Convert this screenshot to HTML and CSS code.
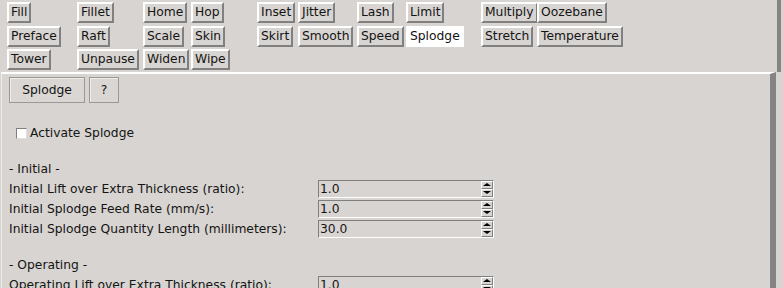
FILE: index.html
```html
<!DOCTYPE html>
<html lang="en">

<head>
    <meta charset="UTF-8">
    <title>Splodge</title>
    <link rel="stylesheet" href="styles.css">
</head>

<body>
    <div class="toolbar">
        <button class="tool">Fill</button>
        <button class="tool">Fillet</button>
        <button class="tool">Home</button>
        <button class="tool">Hop</button>
        <button class="tool">Inset</button>
        <button class="tool">Jitter</button>
        <button class="tool">Lash</button>
        <button class="tool">Limit</button>
        <button class="tool">Multiply</button>
        <button class="tool">Oozebane</button>

        <button class="tool">Preface</button>
        <button class="tool">Raft</button>
        <button class="tool">Scale</button>
        <button class="tool">Skin</button>
        <button class="tool">Skirt</button>
        <button class="tool">Smooth</button>
        <button class="tool">Speed</button>
        <button class="tool active">Splodge</button>
        <button class="tool">Stretch</button>
        <button class="tool">Temperature</button>

        <button class="tool">Tower</button>
        <button class="tool">Unpause</button>
        <button class="tool">Widen</button>
        <button class="tool">Wipe</button>
    </div>

    <div class="panel">
        <div class="actions">
            <button class="flat wide">Splodge</button>
            <button class="flat">?</button>
        </div>

        <label class="check">
            <span class="box"></span>Activate Splodge
        </label>

        <div class="section">- Initial -</div>
        <div class="row">
            <span class="label">Initial Lift over Extra Thickness (ratio):</span>
            <div class="spin"><span class="value">1.0</span><span class="arrows"><i class="up"></i><i class="down"></i></span></div>
        </div>
        <div class="row">
            <span class="label">Initial Splodge Feed Rate (mm/s):</span>
            <div class="spin"><span class="value">1.0</span><span class="arrows"><i class="up"></i><i class="down"></i></span></div>
        </div>
        <div class="row">
            <span class="label">Initial Splodge Quantity Length (millimeters):</span>
            <div class="spin"><span class="value">30.0</span><span class="arrows"><i class="up"></i><i class="down"></i></span></div>
        </div>

        <div class="section gap">- Operating -</div>
        <div class="row">
            <span class="label">Operating Lift over Extra Thickness (ratio):</span>
            <div class="spin"><span class="value">1.0</span><span class="arrows"><i class="up"></i><i class="down"></i></span></div>
        </div>
    </div>
</body>

</html>
```

FILE: styles.css
```css
body {
    margin: 0;
    width: 783px;
    height: 288px;
    overflow: hidden;
    background-color: #d8d4d1;
    font-family: "DejaVu Sans", sans-serif;
    font-size: 12.3px;
    color: #141414;
}

.toolbar {
    display: grid;
    grid-template-columns: 70px 66px 48px 66px 41px 59px 49px 75px 56px 1fr;
    grid-auto-rows: 21px;
    row-gap: 2.5px;
    padding: 2px 0 0 7px;
    height: 72px;
    box-sizing: border-box;
    width: 781px;
    border-right: 4px solid #848484;
}

.tool {
    justify-self: start;
    height: 21px;
    padding: 0 2px;
    font: inherit;
    color: inherit;
    line-height: 17px;
    background-color: #d8d4d1;
    border: 2px solid;
    border-color: #ffffff #808080 #808080 #ffffff;
    cursor: pointer;
}

.tool.active {
    background-color: #ffffff;
    border-color: #ffffff;
}

.panel {
    width: 775px;
    height: 216px;
    box-sizing: border-box;
    border-top: 2px solid #ffffff;
    border-left: 1px solid #ececea;
    border-right: 6px solid #848484;
    margin-left: 1px;
    padding-left: 7px;
}

.actions {
    display: flex;
    gap: 4px;
    margin-top: 3px;
}

.flat {
    width: 30px;
    height: 26px;
    padding: 0;
    font: inherit;
    color: inherit;
    background-color: #d9d6d3;
    border: 1px solid #9c9894;
    box-shadow: inset 1px 1px #efedeb;
}

.flat.wide {
    width: 76px;
}

.check {
    display: flex;
    align-items: center;
    height: 20px;
    margin: 20px 0 0 7px;
}

.box {
    width: 11px;
    height: 11px;
    box-sizing: border-box;
    margin-right: 3px;
    background-color: #ffffff;
    border: 1px solid;
    border-color: #7f7f7f #e0e0e0 #e0e0e0 #7f7f7f;
}

.section {
    height: 20px;
    line-height: 20px;
    margin-top: 16px;
}

.section.gap {
    margin-top: 16px;
}

.row {
    display: flex;
    align-items: center;
    height: 20px;
}

.label {
    width: 309px;
}

.spin {
    display: flex;
    width: 176px;
    height: 18px;
    box-sizing: border-box;
    border: 1px solid;
    border-color: #7f7f7f #ffffff #ffffff #7f7f7f;
}

.value {
    flex: 1;
    padding-left: 1px;
    line-height: 16px;
}

.arrows {
    display: flex;
    flex-direction: column;
    width: 12px;
}

.arrows i {
    flex: 1;
    box-sizing: border-box;
    border: 1px solid;
    border-color: #ffffff #808080 #808080 #ffffff;
    position: relative;
}

.arrows i::after {
    content: "";
    position: absolute;
    left: 1px;
    border-left: 4px solid transparent;
    border-right: 4px solid transparent;
}

.arrows .up::after {
    top: 1px;
    border-bottom: 3px solid #000;
}

.arrows .down::after {
    top: 1px;
    border-top: 3px solid #000;
}
```
